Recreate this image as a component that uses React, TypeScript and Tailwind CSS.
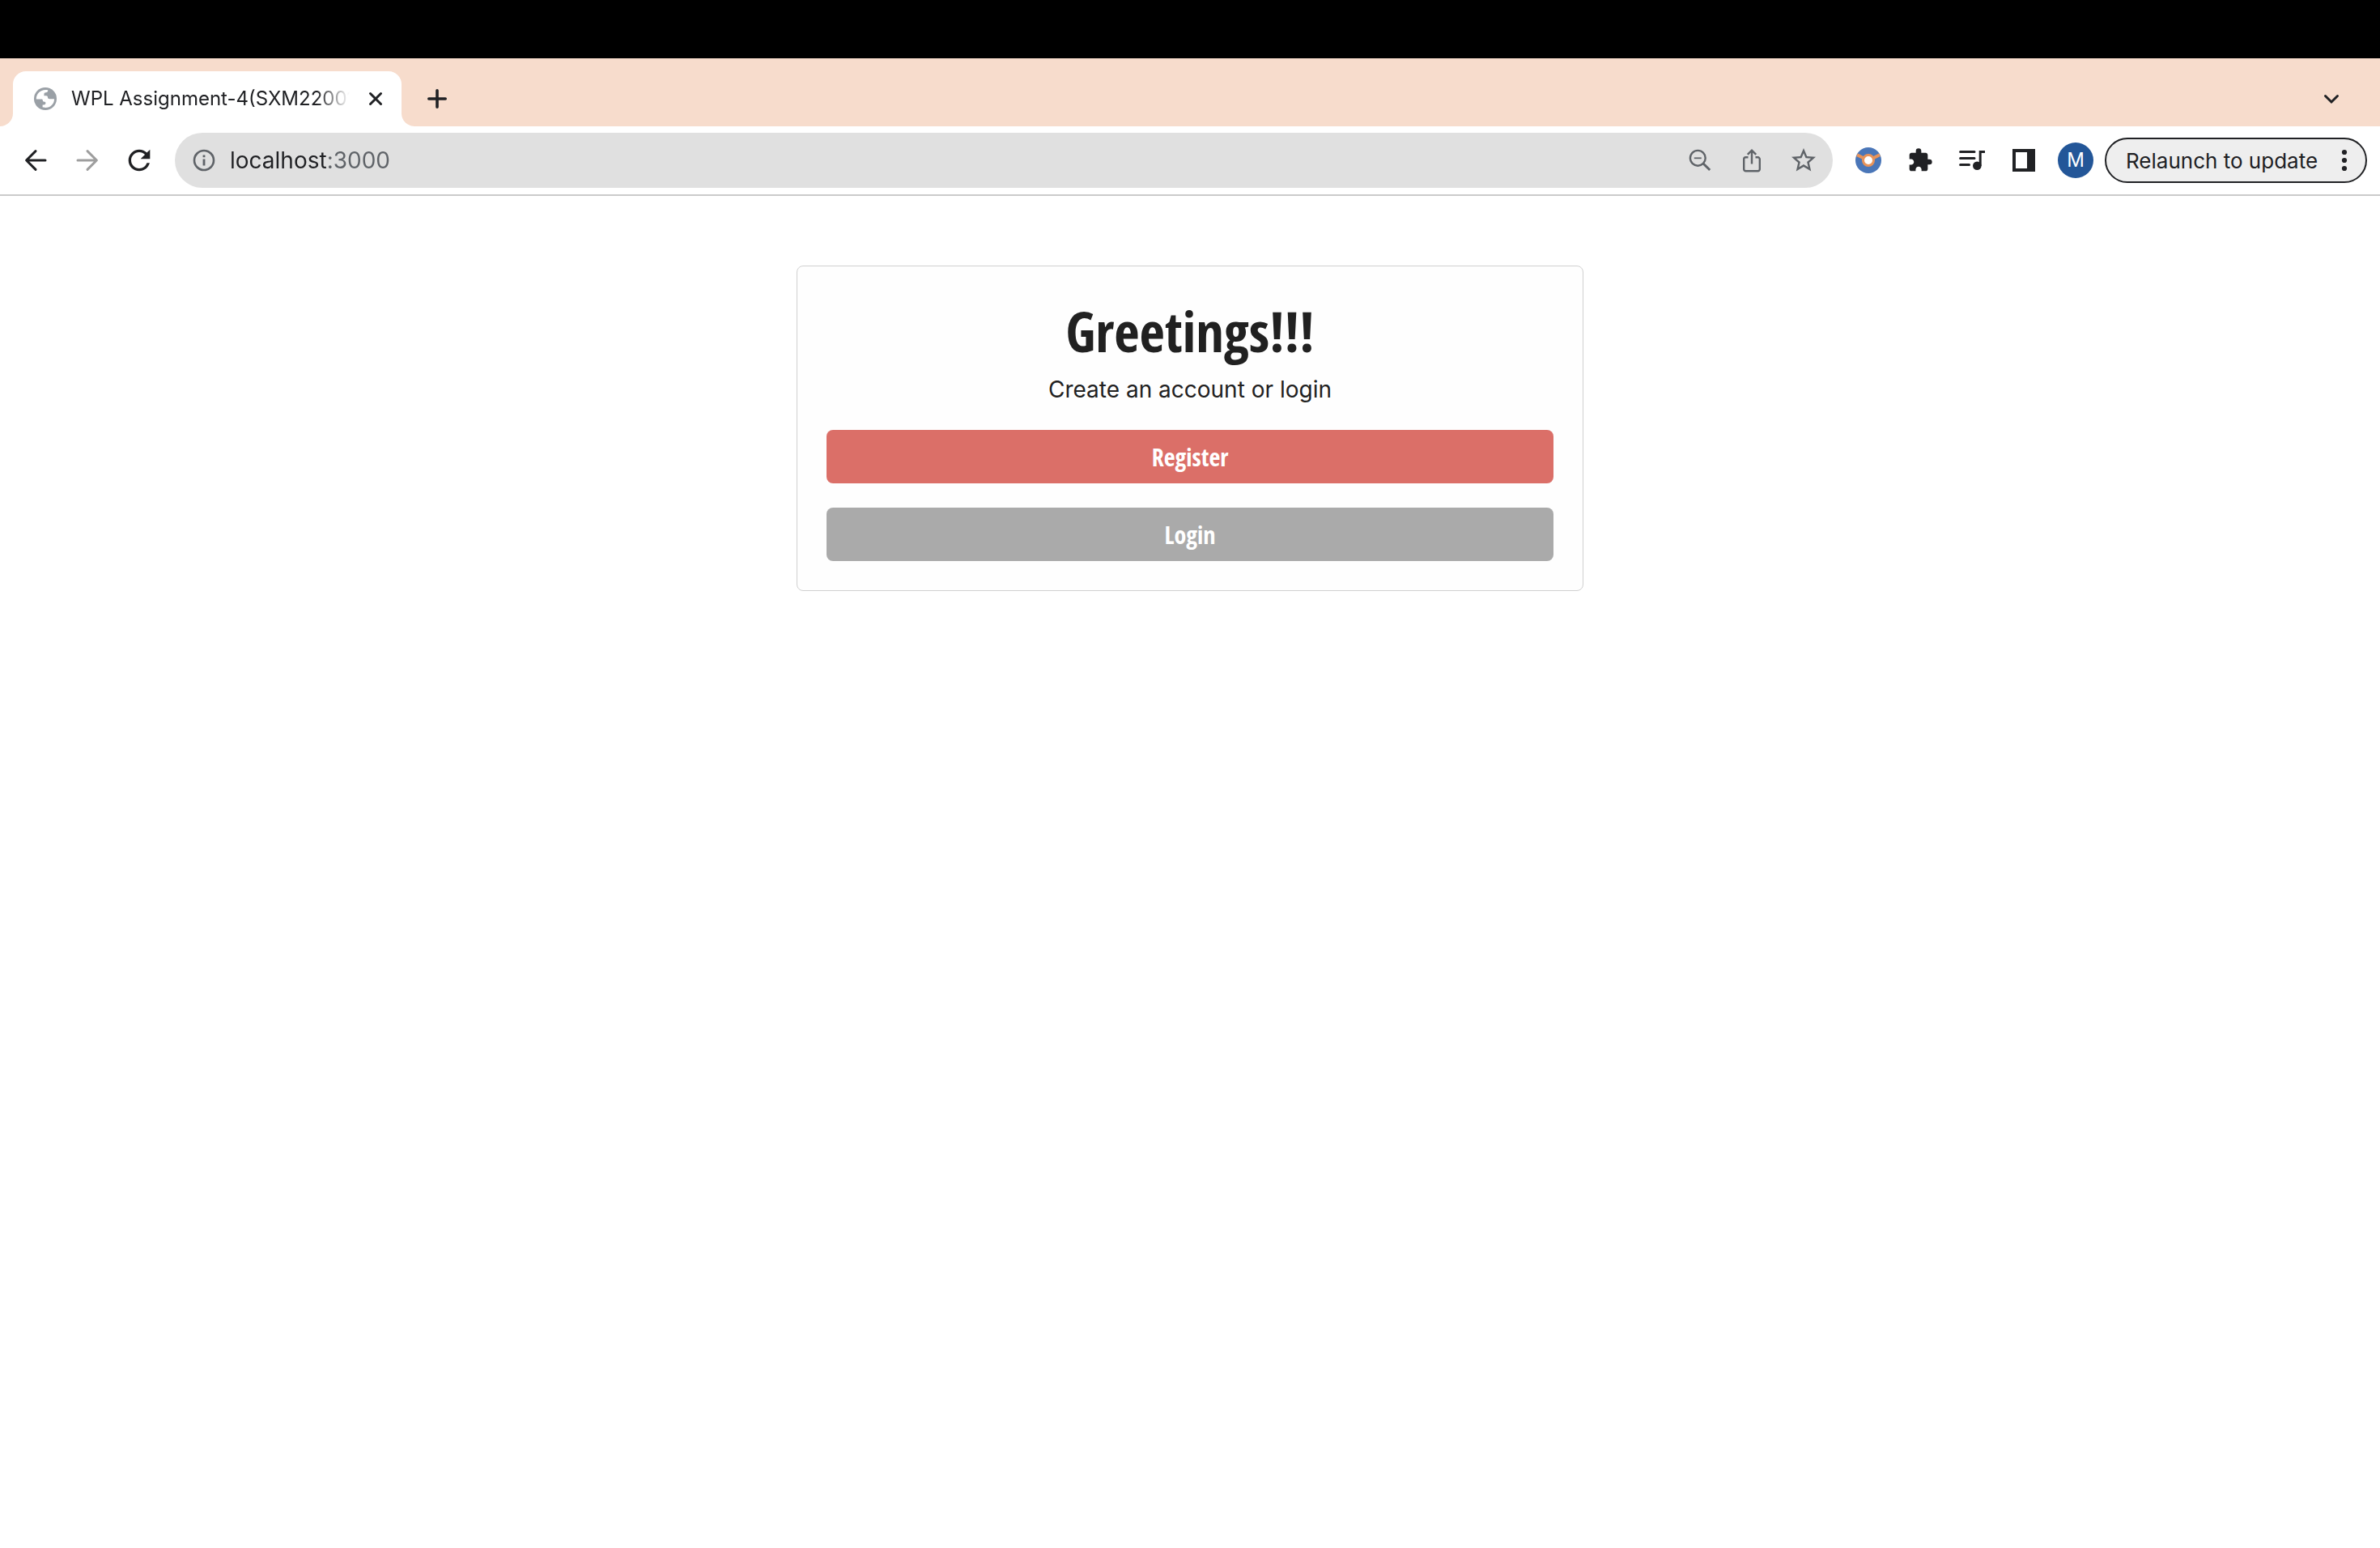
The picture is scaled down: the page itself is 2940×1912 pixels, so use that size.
import React from "react";
import { MdExtension, MdRefresh, MdStarBorder } from "react-icons/md";

type IconProps = { className?: string };

function ArrowLeft({ className }: IconProps) {
  return (
    <svg viewBox="0 0 32 32" className={className} fill="none" stroke="currentColor" strokeWidth="3" strokeLinecap="round" strokeLinejoin="round">
      <path d="M28 16H4.8M16 4.6L4.6 16L16 27.4" />
    </svg>
  );
}

function Globe() {
  return (
    <svg viewBox="0 0 28 28" className="size-7 shrink-0">
      <circle cx="14" cy="14" r="14" fill="#9aa0a6" />
      <path
        fill="#fff"
        d="M2.8 14.6C2.6 8 8 2.8 14.6 3c1.6 0 2.7.3 2.7.3 0 2-1 2.900-2.800 3-1.600.1-2 .8-2 2.200 0 1.200-.6 1.800.6 1.800h2c1.300 0 1.800.7 1.900 2.200.1 1.300.9 1.700 2.300 1.700h5.700C25.200 20 20.400 25 14.200 25c-2 0-3.600-.4-3.600-.4v-3.200h1.600c1.400 0 2.200-.9 2.200-2.200 0-1-.6-1.500-1.600-1.500-1.400 0-1.900-.6-2-1.700-.1-.9-.6-1.400-1.600-1.400z"
      />
    </svg>
  );
}

function Info() {
  return (
    <svg viewBox="0 0 28 28" className="size-7 shrink-0 text-[#5f6368]">
      <circle cx="14" cy="14" r="12" fill="none" stroke="currentColor" strokeWidth="2.6" />
      <path fill="currentColor" d="M12.6 7.4h2.8v2.8h-2.8zM12.6 12.4h2.8v8.2h-2.8z" />
    </svg>
  );
}

function ZoomOut() {
  return (
    <svg viewBox="0 0 32 32" className="size-8" fill="none" stroke="currentColor">
      <circle cx="13.3" cy="13.3" r="9.4" strokeWidth="2.4" />
      <path d="M8.8 13.3h9" strokeWidth="1.8" />
      <path d="M20 20l8.2 8" strokeWidth="3" />
    </svg>
  );
}

function Share() {
  return (
    <svg viewBox="0 0 32 32" className="size-8" fill="none" stroke="currentColor" strokeWidth="2.4">
      <path d="M11.5 12.3H8.500a2.300 2.300 0 0 0-2.300 2.300V27a2.300 2.300 0 0 0 2.300 2.300h15a2.300 2.300 0 0 0 2.300-2.300V14.600a2.300 2.300 0 0 0-2.300-2.300h-3" />
      <path d="M16 20.500V4M10.800 8.800L16 3.600l5.200 5.200" />
    </svg>
  );
}

function Extension() {
  return (
    <svg viewBox="0 0 32 32" className="size-8">
      <circle cx="16" cy="16" r="16" fill="#4a76b8" />
      <path d="M2 9.200L10.500 13.500M30 9.200L21.500 13.500" stroke="#e8935a" strokeWidth="4" />
      <circle cx="16" cy="16" r="6.5" fill="#fff" stroke="#e8935a" strokeWidth="3" />
    </svg>
  );
}

function MediaList() {
  return (
    <svg viewBox="0 0 32 32" className="size-8" fill="none" stroke="currentColor" strokeWidth="3">
      <path strokeLinecap="round" d="M1.600 5.500H19M1.600 13.500H19M1.600 21.500H12.500" />
      <path d="M26.200 23V5.500H32" />
      <circle cx="22.3" cy="22.7" r="5.3" fill="currentColor" stroke="none" />
    </svg>
  );
}

function SidePanel() {
  return (
    <svg viewBox="0 0 28 28" className="size-7">
      <path fill="currentColor" fillRule="evenodd" d="M0 0h28v28H0zM4 4v20h14V4z" />
    </svg>
  );
}

function ToolButton({ label, className = "", children }: { label: string; className?: string; children: React.ReactNode }) {
  return (
    <button type="button" aria-label={label} className={`flex h-16 w-16 shrink-0 items-center justify-center ${className}`}>
      {children}
    </button>
  );
}

function TabStrip() {
  return (
    <div className="flex h-[84px] items-end bg-[#f7dccc] px-4">
      <div className="relative flex h-[68px] w-[480px] items-center rounded-t-2xl bg-white pr-4 pl-[26px]">
        <span className="absolute bottom-0 -left-4 size-4 bg-white">
          <span className="block size-4 rounded-br-2xl bg-[#f7dccc]" />
        </span>
        <span className="absolute -right-4 bottom-0 size-4 bg-white">
          <span className="block size-4 rounded-bl-2xl bg-[#f7dccc]" />
        </span>
        <Globe />
        <span className="ml-[18px] flex-1 overflow-hidden text-2xl whitespace-nowrap mask-r-from-88% mask-r-to-100%">
          WPL Assignment-4(SXM22001
        </span>
        <button type="button" aria-label="Close tab" className="ml-4 flex size-8 items-center justify-center">
          <svg viewBox="0 0 20 20" className="size-5" fill="none" stroke="currentColor" strokeWidth="3" strokeLinecap="round">
            <path d="M3.500 3.500l13 13M16.500 3.500L3.500 16.500" />
          </svg>
        </button>
      </div>
      <button type="button" aria-label="New tab" className="ml-3 flex h-[68px] w-16 items-center justify-center">
        <svg viewBox="0 0 28 28" className="size-7" fill="none" stroke="currentColor" strokeWidth="3.6" strokeLinecap="round">
          <path d="M14 3.800v20.400M3.800 14h20.400" />
        </svg>
      </button>
      <button type="button" aria-label="Search tabs" className="mr-3 ml-auto flex h-[68px] w-16 items-center justify-center">
        <svg viewBox="0 0 20 20" className="size-5" fill="none" stroke="currentColor" strokeWidth="3" strokeLinecap="round">
          <path d="M2.500 6.500L10 14l7.500-7.500" />
        </svg>
      </button>
    </div>
  );
}

function Toolbar() {
  return (
    <div className="flex items-center border-b-2 border-[#cbcbcb] bg-white py-2 pr-4 pl-3">
      <ToolButton label="Back">
        <ArrowLeft className="size-8" />
      </ToolButton>
      <ToolButton label="Forward" className="text-[#9e9e9e]">
        <ArrowLeft className="size-8 rotate-180" />
      </ToolButton>
      <ToolButton label="Reload">
        <MdRefresh className="size-10" />
      </ToolButton>
      <div className="mx-3 flex h-[68px] flex-1 items-center rounded-full bg-[#e0e0e0] pr-1 pl-[22px] text-[#5f6368]">
        <Info />
        <input
          aria-label="Address"
          defaultValue="localhost:3000"
          className="ml-[18px] h-12 min-w-0 flex-1 bg-[linear-gradient(to_right,#202124_121px,#5f6368_121px)] bg-clip-text text-[28px] text-transparent outline-none"
        />
        <ToolButton label="Zoom">
          <ZoomOut />
        </ToolButton>
        <ToolButton label="Share">
          <Share />
        </ToolButton>
        <ToolButton label="Bookmark">
          <MdStarBorder className="size-9" />
        </ToolButton>
      </div>
      <ToolButton label="Extension">
        <Extension />
      </ToolButton>
      <ToolButton label="Extensions">
        <MdExtension className="size-8" />
      </ToolButton>
      <ToolButton label="Media">
        <MediaList />
      </ToolButton>
      <ToolButton label="Side panel">
        <SidePanel />
      </ToolButton>
      <ToolButton label="Profile">
        <span className="flex size-11 items-center justify-center rounded-full bg-[#235698] text-2xl text-white">M</span>
      </ToolButton>
      <button type="button" className="ml-1 flex h-14 w-[324px] shrink-0 items-center justify-between rounded-full border-2 border-[#202124] bg-[#eeeeee] pr-[22px] pl-6 text-[26px] whitespace-nowrap">
        Relaunch to update
        <svg viewBox="0 0 8 28" className="h-7 w-2" fill="currentColor">
          <circle cx="4" cy="4" r="3.1" />
          <circle cx="4" cy="14" r="3.1" />
          <circle cx="4" cy="24" r="3.1" />
        </svg>
      </button>
    </div>
  );
}

export default function App() {
  return (
    <div className="min-h-screen bg-white font-[Inter,sans-serif] text-[#202124]">
      <div className="h-[72px] bg-black" />
      <header>
        <TabStrip />
        <Toolbar />
      </header>
      <main className="px-10 pt-[86px]">
        <section className="mx-auto w-[34%] min-w-96 rounded-lg border border-[#d0d0d0] bg-[#fefefe] px-9 pt-10 pb-9 text-center text-[#212121]">
          <h1 className="font-['Open_Sans_Condensed','Roboto_Condensed',sans-serif] text-[68px] leading-20 font-bold">Greetings!!!</h1>
          <p className="mt-3 text-[28px] leading-10">Create an account or login</p>
          <div className="mt-[30px] flex flex-col gap-[30px] font-['Open_Sans_Condensed','Roboto_Condensed',sans-serif] text-[30px] leading-8 font-bold text-white">
            <button type="button" className="rounded-lg bg-[#db6f68] pt-[18px] pb-4">
              Register
            </button>
            <button type="button" className="rounded-lg bg-[#aaaaaa] pt-[18px] pb-4">
              Login
            </button>
          </div>
        </section>
      </main>
    </div>
  );
}
